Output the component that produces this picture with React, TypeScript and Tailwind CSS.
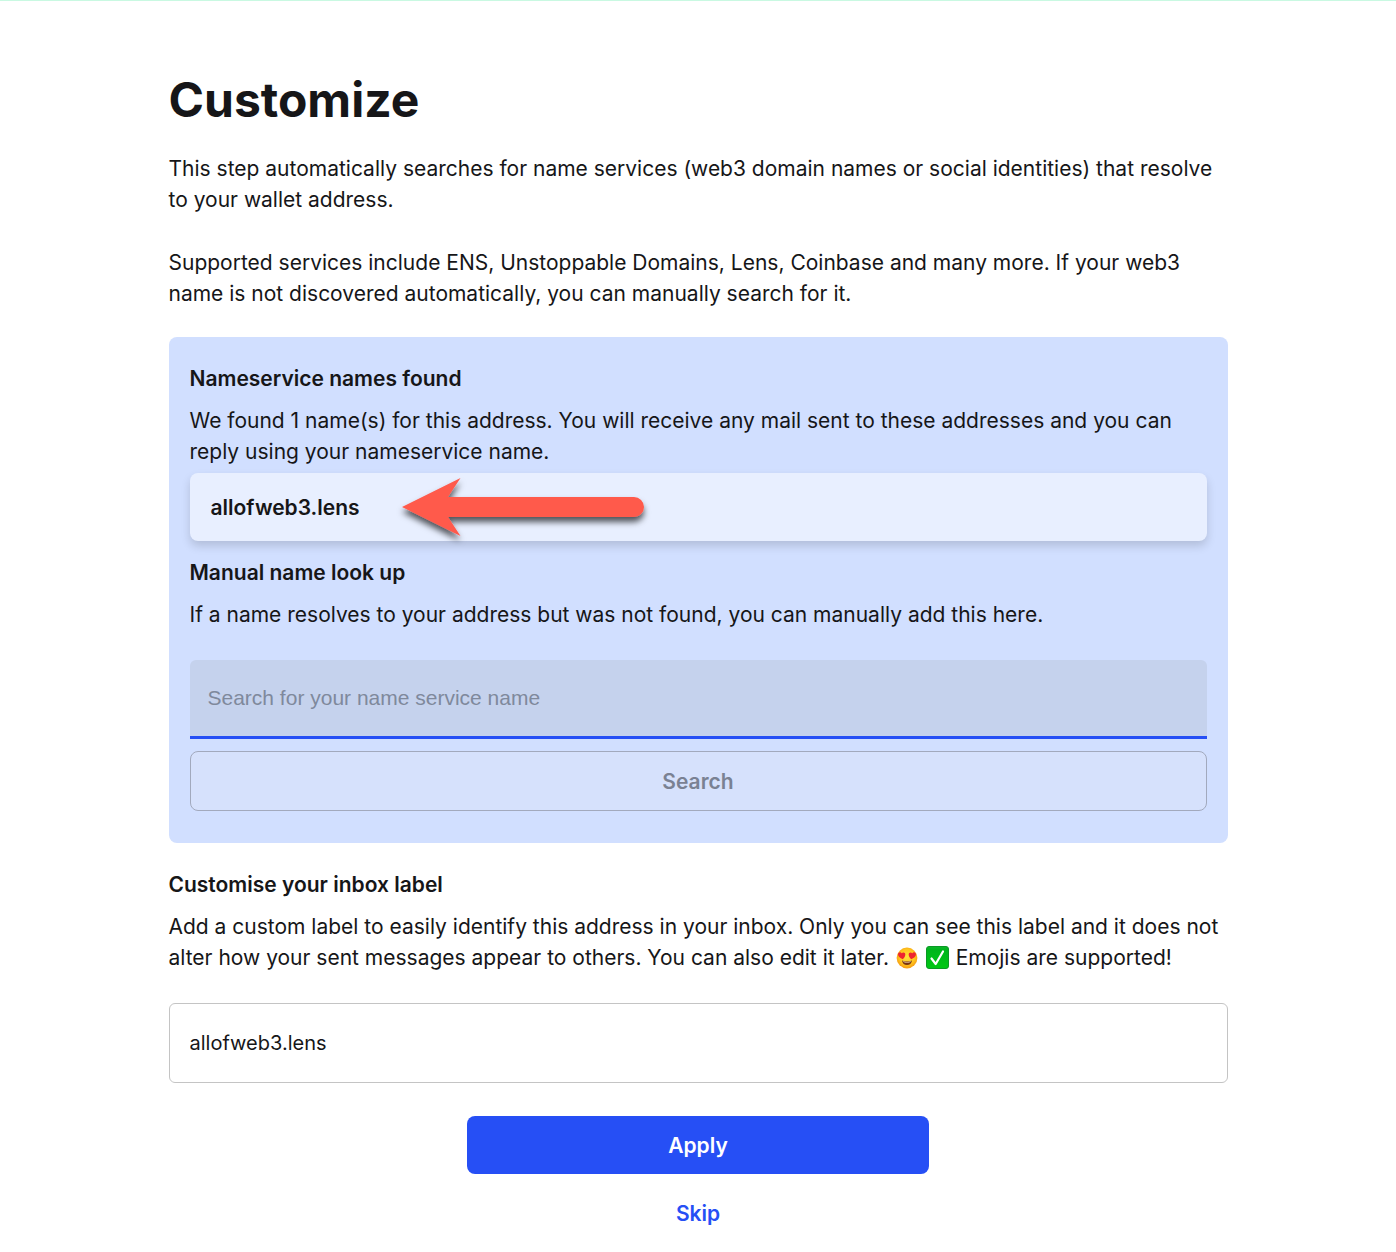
function Arrow() {
  return (
    <svg aria-hidden="true" viewBox="0 0 260 80" className="pointer-events-none absolute top-0 left-[202px] h-20 w-[260px]">
      <defs>
        <filter id="arrow-shadow" x="-10%" y="-30%" width="120%" height="180%">
          <feDropShadow dx="0" dy="5" stdDeviation="3" floodColor="#000" floodOpacity="0.65" />
        </filter>
      </defs>
      <path
        d="M10 34 L68.500 5 L56 24 H242 A10 10 0 0 1 242 44 H56 L68.500 63 Z"
        fill="#ff5a4c"
        filter="url(#arrow-shadow)"
      />
    </svg>
  );
}

function HeartEyesEmoji() {
  return (
    <svg role="img" aria-label="😍" viewBox="0 0 22 22" className="mx-px inline-block size-[22px] align-[-4px]">
      <defs>
        <radialGradient id="face-fill" cx="0.5" cy="0.45" r="0.55">
          <stop offset="0" stopColor="#ffe23c" />
          <stop offset="0.65" stopColor="#ffc61f" />
          <stop offset="1" stopColor="#f59a12" />
        </radialGradient>
      </defs>
      <circle cx="11" cy="11" r="10.400" fill="url(#face-fill)" />
      <path d="M6 13.500 Q11 15.400 16 13.500 Q15.200 18 11 18 Q6.800 18 6 13.500 Z" fill="#7a3410" />
      <path d="M6.800 14.200 Q11 15.700 15.200 14.200 Q14.800 15.500 11 15.600 Q7.200 15.500 6.800 14.200 Z" fill="#fff4dc" />
      <path d="M6.800 12.300 C4.300 11 1.900 9.500 2 7.200 C2.100 5 4.700 4.500 5.700 6.200 C7 4.700 9.500 5.500 9.300 7.700 C9.200 9.400 8 11 6.800 12.300 Z" fill="#ee2430" />
      <path d="M15.200 12.300 C17.700 11 20.100 9.500 20 7.200 C19.900 5 17.300 4.500 16.300 6.200 C15 4.700 12.500 5.500 12.700 7.700 C12.800 9.400 14 11 15.200 12.300 Z" fill="#ee2430" />
    </svg>
  );
}

function CheckEmoji() {
  return (
    <svg role="img" aria-label="✅" viewBox="0 0 23 23" className="mx-px inline-block size-[23px] align-[-4px]">
      <defs>
        <linearGradient id="check-fill" x1="0" y1="0" x2="0" y2="1">
          <stop offset="0" stopColor="#10b52c" />
          <stop offset="0.15" stopColor="#00b51c" />
          <stop offset="1" stopColor="#00c814" />
        </linearGradient>
      </defs>
      <rect x="0.5" y="0.5" width="22" height="22" rx="2.500" fill="url(#check-fill)" stroke="#0b9a25" />
      <path d="M5.500 12.500 L9.700 18 L17 5.500" fill="none" stroke="#fff" strokeWidth="2.2" strokeLinecap="round" strokeLinejoin="round" />
    </svg>
  );
}

export default function App() {
  return (
    <main className="border-t border-[#c9f9e2] bg-white px-6 pt-17 pb-6 font-['Inter',sans-serif] text-[21px] leading-[31px] text-[#161618]">
      <form className="mx-auto flex max-w-[1059px] flex-col" onSubmit={(e) => e.preventDefault()}>
        <h1 className="text-5xl leading-[62px] font-bold">Customize</h1>
        <p className="mt-[22px]">
          This step automatically searches for name services (web3 domain names or social identities) that resolve to your wallet address.
        </p>
        <p className="mt-8">
          Supported services include ENS, Unstoppable Domains, Lens, Coinbase and many more. If your web3 name is not discovered automatically, you can manually search for it.
        </p>
        <section className="mt-7 rounded-lg bg-[#d1dfff] px-[21px] pt-[26px] pb-8">
          <h2 className="leading-8 font-semibold">Nameservice names found</h2>
          <p className="mt-2.5">
            We found 1 name(s) for this address. You will receive any mail sent to these addresses and you can reply using your nameservice name.
          </p>
          <div className="relative mt-1.5 flex h-[68px] items-center rounded-lg bg-[#e8efff] px-[21px] font-semibold shadow-[0_5px_10px_rgba(0,0,0,0.15)]">
            allofweb3.lens
            <Arrow />
          </div>
          <h2 className="mt-4 leading-8 font-semibold">Manual name look up</h2>
          <p className="mt-2.5">If a name resolves to your address but was not found, you can manually add this here.</p>
          <input
            aria-label="Name service name"
            placeholder="Search for your name service name"
            className="mt-[30px] block h-[79px] w-full rounded-t-md border-b-3 border-[#264ff5] bg-[#c5d2ed] px-[18px] font-['Liberation_Sans',sans-serif] placeholder:text-[#7f899c]"
          />
          <button type="button" className="mt-3 h-[60px] w-full rounded-lg border border-[#a2a9bd] bg-[#d6e1fc] font-semibold text-[#7a8193]">
            Search
          </button>
        </section>
        <label htmlFor="label" className="mt-[26px] leading-8 font-semibold">Customise your inbox label</label>
        <p className="mt-2.5">
          Add a custom label to easily identify this address in your inbox. Only you can see this label and it does not alter how your sent messages appear to others. You can also edit it later. <HeartEyesEmoji /> <CheckEmoji /> Emojis are supported!
        </p>
        <input id="label" defaultValue="allofweb3.lens" className="mt-[30px] h-20 rounded-md border border-[#c4c4c4] px-5 text-xl" />
        <button type="submit" className="mt-[33px] h-[58px] w-full max-w-[462px] self-center rounded-lg bg-[#264ff5] font-semibold text-white">
          Apply
        </button>
        <button type="button" className="mt-6 self-center font-semibold text-[#264ff5]">Skip</button>
      </form>
    </main>
  );
}
